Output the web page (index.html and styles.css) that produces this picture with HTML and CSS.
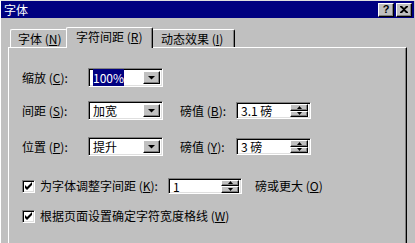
FILE: index.html
```html
<!DOCTYPE html>
<html lang="zh-CN">
<head>
<meta charset="utf-8">
<title>字体</title>
<link rel="stylesheet" href="styles.css">
</head>
<body>
<div class="window">
  <div class="titlebar">
    <span class="title">字体</span>
    <div class="tbtns">
      <div class="tbtn"><span class="q">?</span></div>
      <div class="tbtn"><svg width="8" height="7" viewBox="0 0 8 7"><path d="M0 0h2l2 2 2-2h2v1L5 3.5 8 6v1H6L4 5 2 7H0V6l3-2.5L0 1z" fill="#000"/></svg></div>
    </div>
  </div>
  <div class="tabs">
    <div class="tab first">字体 (<u>N</u>)</div>
    <div class="tab active">字符间距 (<u>R</u>)</div>
    <div class="tab last">动态效果 (<u>I</u>)</div>
  </div>
  <div class="panel">
    <div class="row row1">
      <span class="lbl">缩放 (<u>C</u>):</span>
      <div class="combo"><span class="val"><span class="sel">100%</span></span><span class="drop"><svg width="7" height="4" viewBox="0 0 7 4"><path d="M0 0h7L3.5 3.5z" fill="#000"/></svg></span></div>
    </div>
    <div class="row row2">
      <span class="lbl">间距 (<u>S</u>):</span>
      <div class="combo"><span class="val">加宽</span><span class="drop"><svg width="7" height="4" viewBox="0 0 7 4"><path d="M0 0h7L3.5 3.5z" fill="#000"/></svg></span></div>
      <span class="lbl2">磅值 (<u>B</u>):</span>
      <div class="spin"><span class="val">3.1 磅</span><span class="arrows"><span class="ab"><svg width="5" height="3" viewBox="0 0 5 3"><path d="M2.5 0L5 3H0z" fill="#000"/></svg></span><span class="ab"><svg width="5" height="3" viewBox="0 0 5 3"><path d="M0 0h5L2.5 3z" fill="#000"/></svg></span></span></div>
    </div>
    <div class="row row3">
      <span class="lbl">位置 (<u>P</u>):</span>
      <div class="combo"><span class="val">提升</span><span class="drop"><svg width="7" height="4" viewBox="0 0 7 4"><path d="M0 0h7L3.5 3.5z" fill="#000"/></svg></span></div>
      <span class="lbl2">磅值 (<u>Y</u>):</span>
      <div class="spin"><span class="val">3 磅</span><span class="arrows"><span class="ab"><svg width="5" height="3" viewBox="0 0 5 3"><path d="M2.5 0L5 3H0z" fill="#000"/></svg></span><span class="ab"><svg width="5" height="3" viewBox="0 0 5 3"><path d="M0 0h5L2.5 3z" fill="#000"/></svg></span></span></div>
    </div>
    <div class="crow crow1">
      <span class="cb"><svg width="9" height="9" viewBox="0 0 9 9"><path d="M1 3v3l2 2 5-5V0L3 5z" fill="#000"/></svg></span>
      <span class="ctext">为字体调整字间距 (<u>K</u>):</span>
      <div class="spin small"><span class="val">1</span><span class="arrows"><span class="ab"><svg width="5" height="3" viewBox="0 0 5 3"><path d="M2.5 0L5 3H0z" fill="#000"/></svg></span><span class="ab"><svg width="5" height="3" viewBox="0 0 5 3"><path d="M0 0h5L2.5 3z" fill="#000"/></svg></span></span></div>
      <span class="after">磅或更大 (<u>O</u>)</span>
    </div>
    <div class="crow crow2">
      <span class="cb"><svg width="9" height="9" viewBox="0 0 9 9"><path d="M1 3v3l2 2 5-5V0L3 5z" fill="#000"/></svg></span>
      <span class="ctext">根据页面设置确定字符宽度格线 (<u>W</u>)</span>
    </div>
  </div>
</div>
</body>
</html>
```

FILE: styles.css
```css
* { box-sizing: border-box; }
html, body { margin: 0; padding: 0; }
body {
  width: 415px;
  height: 243px;
  overflow: hidden;
  background: #c0c0c0;
  font-family: "Noto Sans CJK SC", "Noto Sans", sans-serif;
  font-size: 12px;
  line-height: 14px;
  color: #000;
}
u { text-decoration: underline; text-underline-offset: 1px; }

.window {
  width: 415px;
  height: 243px;
  border-left: 1px solid #fff;
  border-top: 1px solid #dfdfdf;
  padding: 0 1px 0 0;
  display: flex;
  flex-direction: column;
}
.titlebar {
  height: 17px;
  background: #000080;
  color: #fff;
  display: flex;
  align-items: center;
  justify-content: space-between;
  padding: 0 2px 0 3px;
}
.title { font-size: 12px; line-height: 14px; }
.tbtns { display: flex; gap: 2px; }
.tbtn {
  width: 16px;
  height: 14px;
  background: #c0c0c0;
  border: 1px solid;
  border-color: #fff #000 #000 #fff;
  box-shadow: inset -1px -1px #808080;
  display: flex;
  align-items: center;
  justify-content: center;
}
.q {
  color: #000;
  font-family: "Liberation Sans", sans-serif;
  font-weight: bold;
  font-size: 11px;
  line-height: 11px;
}

.tabs {
  display: flex;
  align-items: flex-end;
  height: 29px;
  padding-left: 9px;
  position: relative;
  z-index: 1;
}
.tab {
  height: 18px;
  border-left: 1px solid #fff;
  border-top: 1px solid #fff;
  border-right: 1px solid #000;
  box-shadow: inset -1px 0 #808080;
  border-radius: 2px 2px 0 0;
  padding: 1px 6px 0 7px;
  white-space: nowrap;
  display: flex;
  align-items: center;
}
.tab.first { width: 57px; border-right: none; box-shadow: none; }
.tab.active {
  height: 21px;
  width: 87px;
  margin-left: -1px;
  margin-right: -1px;
  margin-bottom: -1px;
  background: #c0c0c0;
  padding: 0 6px 3px 9px;
  border-right: 1px solid #000;
  position: relative;
  z-index: 2;
}
.tab.last { width: 83px; padding-left: 8px; }

.panel {
  flex: 1;
  margin: 0 7px 0 7px;
  border-left: 1px solid #fff;
  border-top: 1px solid #fff;
  border-right: 1px solid #000;
  box-shadow: inset -1px 0 #808080;
  padding: 20px 0 0 13px;
  display: flex;
  flex-direction: column;
}

.row { display: flex; align-items: center; height: 19px; }
.row2 { margin-top: 14px; }
.row3 { margin-top: 17px; }
.lbl { width: 66px; white-space: nowrap; }
.lbl2 { width: 56px; margin-left: 17px; white-space: nowrap; }

.combo, .spin {
  background: #fff;
  border: 1px solid;
  border-color: #808080 #fff #fff #808080;
  box-shadow: inset 1px 1px #000, inset -1px -1px #dfdfdf;
  display: flex;
  align-items: center;
  padding: 2px;
}
.combo { width: 75px; height: 19px; }
.spin { width: 75px; height: 17px; }
.val { flex: 1; padding-left: 2px; white-space: nowrap; line-height: 13px; }
.sel { background: #000080; color: #fff; }
.drop {
  width: 17px;
  height: 13px;
  background: #c0c0c0;
  border: 1px solid;
  border-color: #fff #000 #000 #fff;
  box-shadow: inset -1px -1px #808080;
  display: flex;
  align-items: center;
  justify-content: center;
}
.drop svg { display: block; margin-top: 1px; }
.arrows { display: flex; flex-direction: column; width: 18px; height: 13px; }
.ab {
  flex: 1;
  background: #c0c0c0;
  border: 1px solid;
  border-color: #fff #000 #000 #fff;
  box-shadow: inset -1px -1px #808080;
  display: flex;
  align-items: center;
  justify-content: center;
}
.ab svg { display: block; }

.crow { display: flex; align-items: center; height: 16px; }
.crow1 { margin-top: 22px; }
.crow2 { margin-top: 14px; }
.cb {
  width: 13px;
  height: 13px;
  background: #fff;
  border: 1px solid;
  border-color: #808080 #fff #fff #808080;
  box-shadow: inset 1px 1px #000, inset -1px -1px #dfdfdf;
  display: flex;
  align-items: center;
  justify-content: center;
  flex: none;
}
.cb svg { display: block; }
.ctext { margin-left: 5px; white-space: nowrap; }
.crow1 .ctext { width: 128px; }
.spin.small { width: 74px; height: 16px; }
.after { margin-left: 13px; white-space: nowrap; }
```
